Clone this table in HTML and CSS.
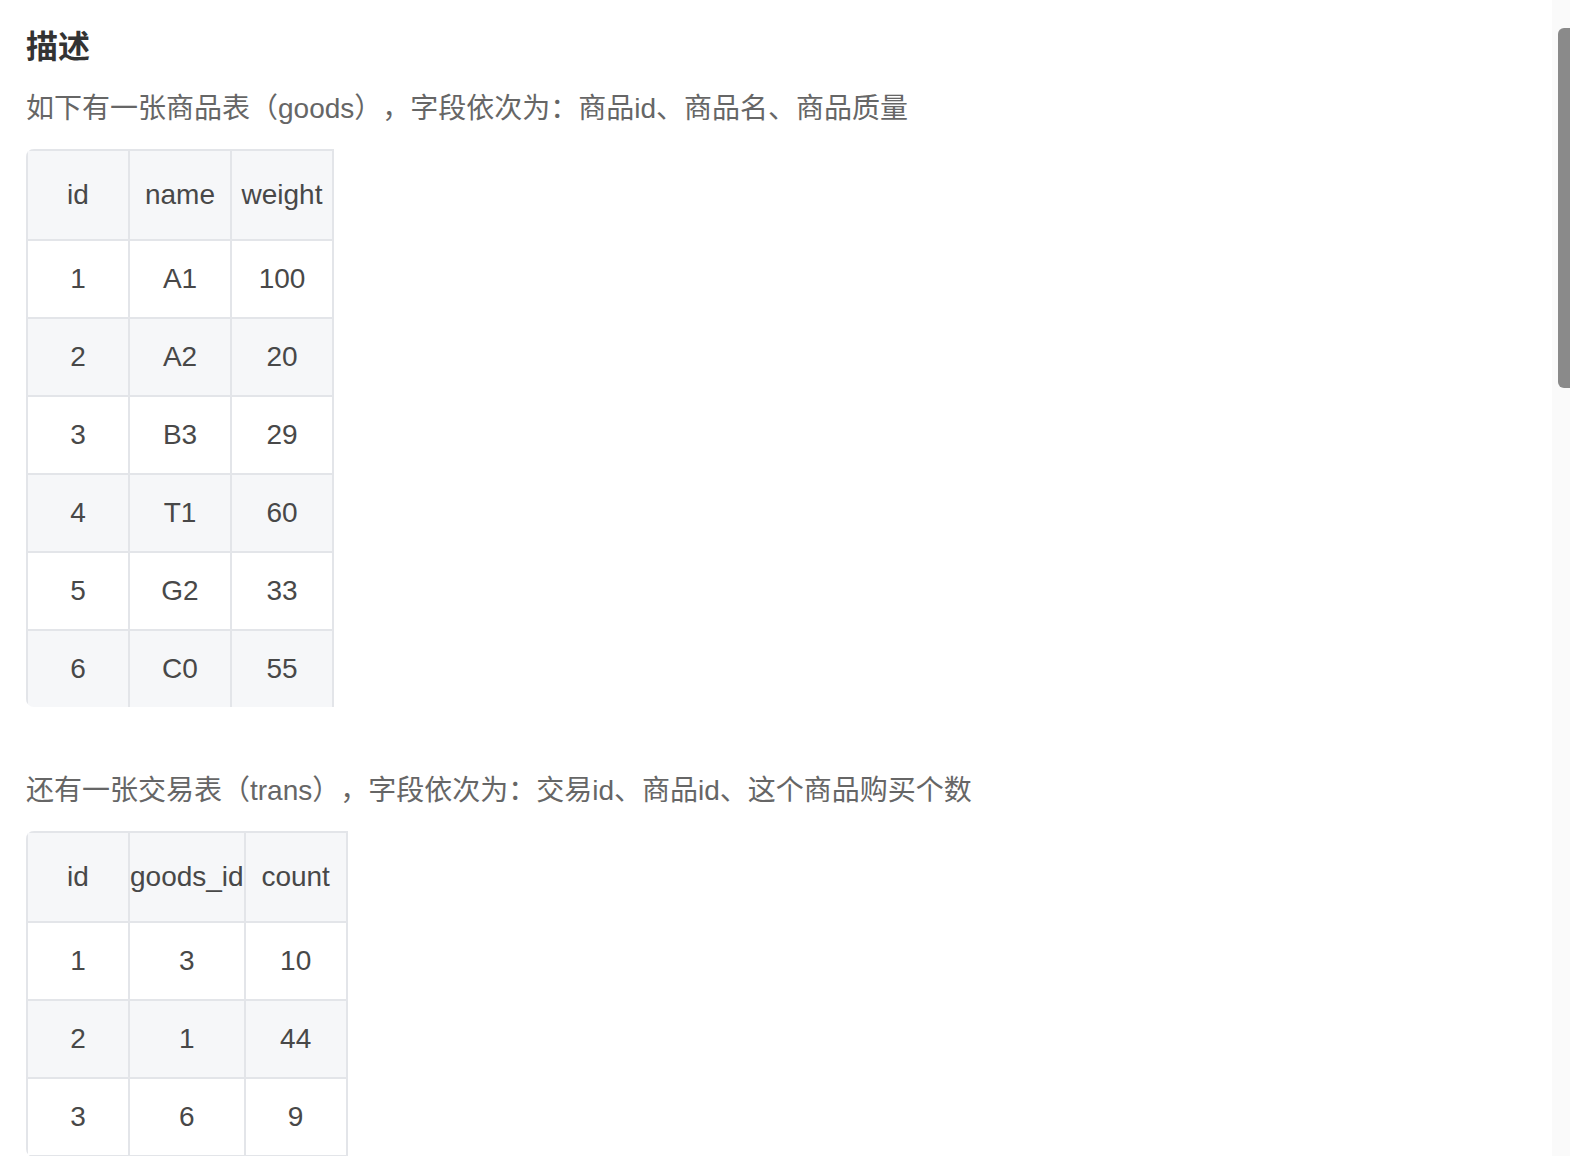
FILE: index.html
```html
<!DOCTYPE html>
<html lang="zh-CN">
<head>
<meta charset="utf-8">
<title>描述</title>
<link rel="stylesheet" href="styles.css">
</head>
<body>
<div class="page">
  <h2 class="title">描述</h2>
  <p class="desc desc-first">如下有一张商品表（goods），字段依次为：商品id、商品名、商品质量</p>
  <div class="table-wrap">
    <table class="data">
      <thead>
        <tr><th>id</th><th>name</th><th>weight</th></tr>
      </thead>
      <tbody>
        <tr><td>1</td><td>A1</td><td>100</td></tr>
        <tr><td>2</td><td>A2</td><td>20</td></tr>
        <tr><td>3</td><td>B3</td><td>29</td></tr>
        <tr><td>4</td><td>T1</td><td>60</td></tr>
        <tr><td>5</td><td>G2</td><td>33</td></tr>
        <tr><td>6</td><td>C0</td><td>55</td></tr>
      </tbody>
    </table>
  </div>
  <p class="desc desc-second">还有一张交易表（trans），字段依次为：交易id、商品id、这个商品购买个数</p>
  <div class="table-wrap">
    <table class="data data-open">
      <thead>
        <tr><th>id</th><th>goods_id</th><th>count</th></tr>
      </thead>
      <tbody>
        <tr><td>1</td><td>3</td><td>10</td></tr>
        <tr><td>2</td><td>1</td><td>44</td></tr>
        <tr><td>3</td><td>6</td><td>9</td></tr>
      </tbody>
    </table>
  </div>
</div>
<div class="scrollbar"><div class="scrollbar-thumb"></div></div>
</body>
</html>
```
FILE: styles.css
```css
html, body {
  margin: 0;
  padding: 0;
  background: #ffffff;
  overflow: hidden;
  height: 100%;
}

body {
  font-family: "Liberation Sans", "Noto Sans CJK SC", sans-serif;
  color: #333333;
  text-spacing-trim: space-all;
}

.page {
  padding: 25px 26px 0 26px;
}

.title {
  margin: 0;
  font-size: 32px;
  line-height: 44px;
  font-weight: bold;
  color: #333333;
}

.desc {
  margin: 18px 0 0 0;
  font-size: 28px;
  line-height: 44px;
  color: #666666;
  text-spacing-trim: space-all;
}

.desc-second {
  margin-top: 62px;
}

.table-wrap {
  margin-top: 18px;
  border-radius: 8px;
  overflow: hidden;
}

.data {
  border-collapse: separate;
  border-spacing: 0;
  font-size: 28px;
  color: #484848;
}

.data th,
.data td {
  width: 100px;
  padding: 0;
  text-align: center;
  font-weight: normal;
  border-right: 2px solid #e3e5e9;
  border-bottom: 2px solid #e3e5e9;
  white-space: nowrap;
}

.data th:first-child,
.data td:first-child {
  border-left: 2px solid #e3e5e9;
}

.data th {
  line-height: 88px;
  border-top: 2px solid #e3e5e9;
  background: #f6f7f9;
}

.data td {
  line-height: 76px;
  background: #ffffff;
}

.data tbody tr:nth-child(even) td {
  background: #f6f7f9;
}

.data tbody tr:last-child td {
  border-bottom: none;
}

.data-open tbody tr:last-child td {
  border-bottom: 2px solid #e3e5e9;
}

.scrollbar {
  position: fixed;
  top: 0;
  right: 0;
  width: 18px;
  height: 100%;
  background: #fafafa;
}

.scrollbar-thumb {
  position: absolute;
  top: 28px;
  right: 0;
  width: 12px;
  height: 360px;
  background: #8a8a8a;
  border-radius: 6px 0 0 6px;
}
```
